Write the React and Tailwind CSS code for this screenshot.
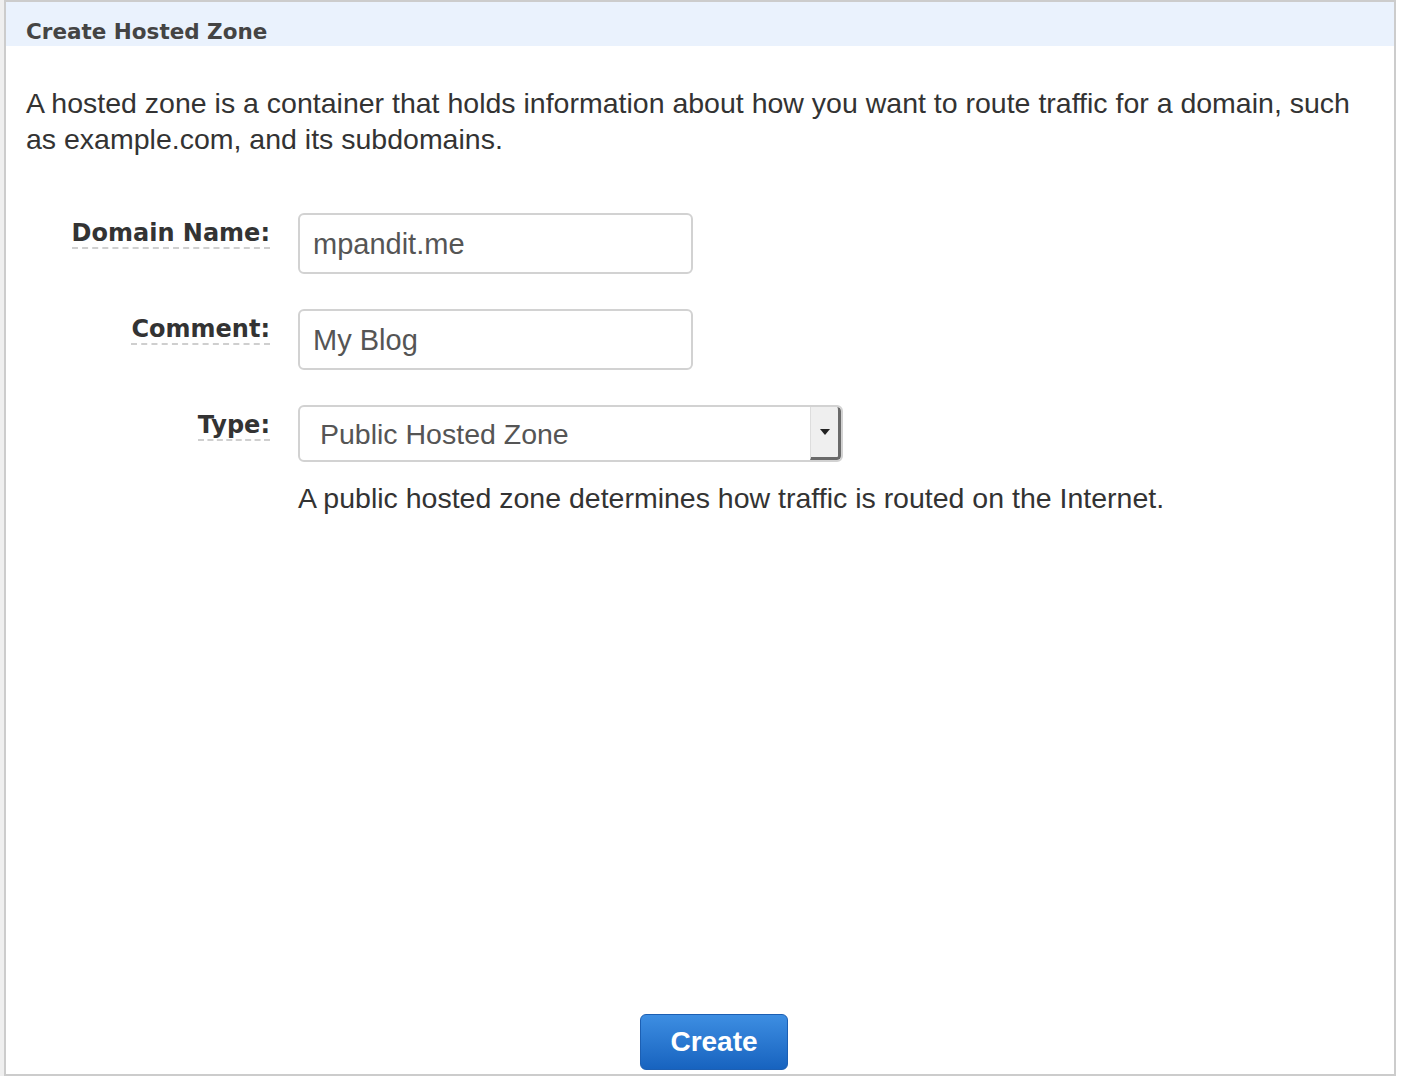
export default function App() {
  const labelCls =
    "inline-block font-bold text-[24px] leading-[22px] text-[#333] border-b-2 border-dashed border-[#cfcfcf] pb-[3px]";
  const labelFont = { fontFamily: '"DejaVu Sans", Verdana, sans-serif' };
  return (
    <div className="w-[1408px] h-[1086px] bg-white">
      <div className="flex h-[1076px]">
        <div className="w-[4px] bg-[#efefef]" />
        <div className="w-[1392px] border-2 border-[#cccccc] flex flex-col bg-white">
          <div className="h-[44px] bg-[#eaf2fd] flex items-center pl-[20px] pt-[15px]">
            <span
              className="font-bold text-[21.5px] leading-[24px] text-[#444]"
              style={{ fontFamily: '"DejaVu Sans", Verdana, sans-serif' }}
            >
              Create Hosted Zone
            </span>
          </div>
          <div style={{ fontFamily: '"Liberation Sans", Arial, sans-serif' }} className="flex flex-col flex-1">
            <p className="mt-[39px] pl-[20px] text-[28.5px] leading-[36px] text-[#333] whitespace-nowrap">
              A hosted zone is a container that holds information about how you want to route traffic for a domain, such
              <br />
              as example.com, and its subdomains.
            </p>
            <div className="mt-[56px] pl-[20px] flex flex-col gap-[35px]">
              <div className="flex items-start gap-[28px]">
                <div className="w-[244px] flex justify-end pt-[9px]">
                  <span className={labelCls} style={labelFont}>Domain Name:</span>
                </div>
                <div className="w-[395px] h-[61px] border-2 border-[#d2d2d2] rounded-[6px] flex items-center pl-[13px] pt-[3px] text-[29px] text-[#555]">
                  mpandit.me
                </div>
              </div>
              <div className="flex items-start gap-[28px]">
                <div className="w-[244px] flex justify-end pt-[9px]">
                  <span className={labelCls} style={labelFont}>Comment:</span>
                </div>
                <div className="w-[395px] h-[61px] border-2 border-[#d2d2d2] rounded-[6px] flex items-center pl-[13px] pt-[3px] text-[29px] text-[#555]">
                  My Blog
                </div>
              </div>
              <div className="flex items-start gap-[28px]">
                <div className="w-[244px] flex justify-end pt-[9px]">
                  <span className={labelCls} style={labelFont}>Type:</span>
                </div>
                <div className="flex flex-col">
                  <div className="w-[545px] h-[57px] border-2 border-[#d2d2d2] rounded-[6px] flex items-stretch overflow-hidden">
                    <div className="flex-1 flex items-center pl-[20px] pt-[1px] text-[28.5px] text-[#555]">
                      Public Hosted Zone
                    </div>
                    <div className="w-[31px] bg-[#efefef] border-l border-[#dddddd] border-r-[3px] border-b-[3px] border-r-[#6a6a6a] border-b-[#6a6a6a] rounded-tr-[4px] rounded-br-[4px] flex items-center justify-center">
                      <svg width="10" height="6" viewBox="0 0 10 6">
                        <path d="M0 0 H10 L5 6 Z" fill="#222" />
                      </svg>
                    </div>
                  </div>
                  <p className="mt-[18px] text-[28.5px] leading-[36px] text-[#333] whitespace-nowrap">
                    A public hosted zone determines how traffic is routed on the Internet.
                  </p>
                </div>
              </div>
            </div>
            <div className="flex-1" />
            <div className="flex justify-center pl-[28px] mb-[4px]">
              <button className="w-[148px] h-[56px] rounded-[6px] border border-[#1c5fb3] bg-gradient-to-b from-[#3d8ee2] to-[#1763bf] text-white font-bold text-[28px]">
                Create
              </button>
            </div>
          </div>
        </div>
      </div>
    </div>
  );
}
